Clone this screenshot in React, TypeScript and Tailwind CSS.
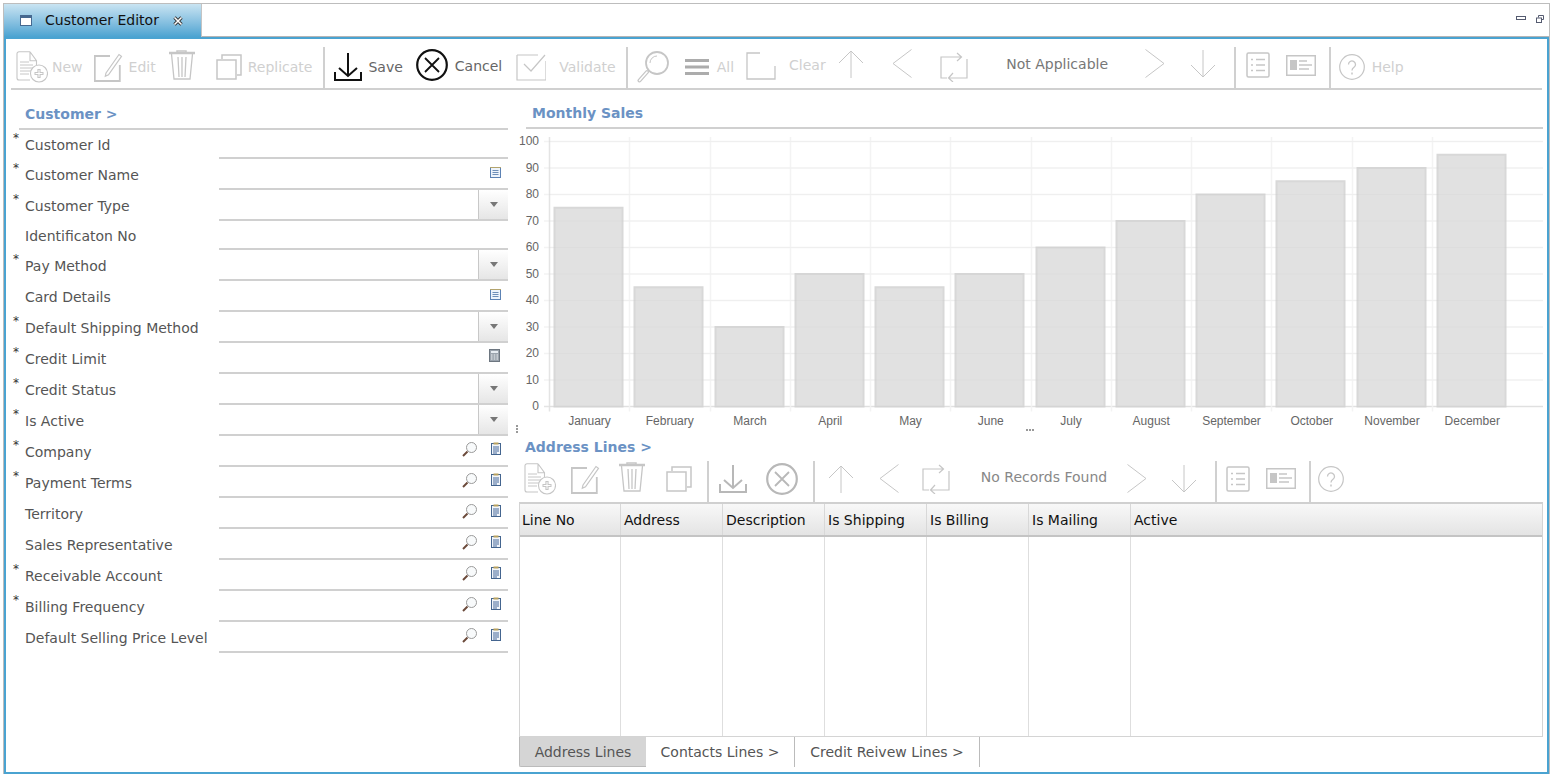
import type { ReactNode } from 'react';

type IconProps = { className?: string };

function NewIcon({ className }: IconProps) {
    return (
        <svg viewBox="0 0 32 32" fill="none" stroke="currentColor" className={className}>
            <path d="M14 .7H3a2 2 0 0 0-2 2V27a2 2 0 0 0 2 2h11M14 .7l6.500 9V14M14 .7v9h6.500" strokeWidth="1.100" />
            <path d="M4 11h9M4 14h13M4 17h13M4 20h11M4 23h9" strokeWidth="1" />
            <circle cx="23" cy="22.500" r="8.500" fill="#fff" strokeWidth="1.100" />
            <path d="M23 18v9M18.500 22.500h9" strokeWidth="3.200" />
            <path d="M23 19v7M19.500 22.500h7" stroke="#fff" strokeWidth="1" />
        </svg>
    );
}

function EditIcon({ className }: IconProps) {
    return (
        <svg viewBox="0 0 29 30" fill="none" stroke="currentColor" className={className}>
            <path d="M16 4H.8v25h25V13" strokeWidth="1.800" />
            <path d="M12 21l13-18.500 2.500 1.800-13 18.500-3.200 1.500z" strokeWidth="1.200" fill="#fff" />
        </svg>
    );
}

function TrashIcon({ className }: IconProps) {
    return (
        <svg viewBox="0 0 26 30" fill="none" stroke="currentColor" className={className}>
            <path d="M0 3h26" strokeWidth="2.500" />
            <path d="M8 2V1h9v1" strokeWidth="1.500" />
            <path d="M2.500 4l2.500 25h16l2.500-25M9 7l1 20M13 7v20M17 7l-1 20" strokeWidth="1.300" />
        </svg>
    );
}

function ReplicateIcon({ className }: IconProps) {
    return (
        <svg viewBox="0 0 26 26" fill="none" stroke="currentColor" strokeWidth="1.500" className={className}>
            <rect x="1" y="6" width="19" height="19" />
            <path d="M6 5V1h19v20h-4" />
        </svg>
    );
}

function SaveIcon({ className }: IconProps) {
    return (
        <svg viewBox="0 0 28 28" fill="none" stroke="currentColor" strokeWidth="2" className={className}>
            <path d="M1 19v8h26v-8" />
            <path d="M14 0v23M5 15l9 8 9-8" />
        </svg>
    );
}

function CancelIcon({ className }: IconProps) {
    return (
        <svg viewBox="0 0 32 32" fill="none" stroke="currentColor" className={className}>
            <circle cx="16" cy="16" r="14.800" strokeWidth="2.200" />
            <path d="M9 9l14 14M23 9L9 23" strokeWidth="1.800" />
        </svg>
    );
}

function ValidateIcon({ className }: IconProps) {
    return (
        <svg viewBox="0 0 30 29" fill="none" stroke="currentColor" strokeWidth="1.200" className={className}>
            <path d="M1 3h21M1 3v25h29V9" />
            <path d="M8 12l7 7L29 3" />
        </svg>
    );
}

function SearchIcon({ className }: IconProps) {
    return (
        <svg viewBox="0 0 32 32" fill="none" stroke="currentColor" className={className}>
            <circle cx="20" cy="12" r="11" strokeWidth="1.800" />
            <path d="M10 21L2.500 29.500" strokeWidth="4" strokeLinecap="round" />
            <path d="M10 21L2.500 29.500" stroke="#fff" strokeWidth="1.500" strokeLinecap="round" />
            <path d="M13 12a7 7 0 0 1 7-7" strokeWidth="1" />
        </svg>
    );
}

function AllIcon({ className }: IconProps) {
    return (
        <svg viewBox="0 0 24 16" fill="currentColor" className={className}>
            <rect y="0" width="24" height="3" />
            <rect y="6.500" width="24" height="3" />
            <rect y="13" width="24" height="3" />
        </svg>
    );
}

function ClearIcon({ className }: IconProps) {
    return (
        <svg viewBox="0 0 30 28" fill="none" stroke="currentColor" strokeWidth="1.300" className={className}>
            <path d="M14 1H1v26h28V14" />
        </svg>
    );
}

function UpIcon({ className }: IconProps) {
    return (
        <svg viewBox="0 0 26 28" fill="none" stroke="currentColor" className={className}>
            <path d="M13 1v27M1 13L13 1l12 12" />
        </svg>
    );
}

function DownIcon({ className }: IconProps) {
    return (
        <svg viewBox="0 0 26 28" fill="none" stroke="currentColor" className={className}>
            <path d="M13 0v27M1 15l12 12 12-12" />
        </svg>
    );
}

function LeftIcon({ className }: IconProps) {
    return (
        <svg viewBox="0 0 20 29" fill="none" stroke="currentColor" className={className}>
            <path d="M19.500 .5L1 14.500l18.500 14" />
        </svg>
    );
}

function RightIcon({ className }: IconProps) {
    return (
        <svg viewBox="0 0 20 29" fill="none" stroke="currentColor" className={className}>
            <path d="M.5 .5L19 14.500.5 28.500" />
        </svg>
    );
}

function RepeatIcon({ className }: IconProps) {
    return (
        <svg viewBox="0 0 28 30" fill="none" stroke="currentColor" strokeWidth="1.200" className={className}>
            <path d="M7 26H1V5h20M17 1l4.500 4-4.500 4" />
            <path d="M27 7v19H9M13 21l-4.500 5 4.500 4" />
        </svg>
    );
}

function ListIcon({ className }: IconProps) {
    return (
        <svg viewBox="0 0 24 26" fill="none" stroke="currentColor" className={className}>
            <rect x="1" y="1" width="22" height="24" rx="1.500" strokeWidth="1.500" />
            <path d="M5 7.500h2M10 7.500h9M5 13h2M10 13h9M5 18.500h2M10 18.500h9" strokeWidth="1.500" />
        </svg>
    );
}

function CardIcon({ className }: IconProps) {
    return (
        <svg viewBox="0 0 30 21" fill="none" stroke="currentColor" className={className}>
            <rect x=".75" y=".75" width="28.500" height="19.500" strokeWidth="1.500" />
            <rect x="4" y="5" width="7" height="10" fill="currentColor" stroke="none" />
            <path d="M13 6h8M13 10h13M13 14h10" strokeWidth="1.500" />
        </svg>
    );
}

function HelpIcon({ className }: IconProps) {
    return (
        <svg viewBox="0 0 26 26" fill="none" stroke="currentColor" className={className}>
            <circle cx="13" cy="13" r="12.300" strokeWidth="1.200" />
            <path d="M9.500 10.500a3.500 3.500 0 1 1 5.500 2.800c-1.300 1-2 1.600-2 3.200" strokeWidth="1.300" />
            <path d="M13 18.500v2" strokeWidth="1.500" />
        </svg>
    );
}

function NoteIcon() {
    return (
        <svg viewBox="0 0 11 11" className="h-[11px] w-[11px]">
            <rect x=".5" y=".5" width="10" height="10" fill="#eef4fb" stroke="#5c82b4" />
            <path d="M0 .5h11" stroke="#b3a46e" />
            <path d="M2.500 3.500h6M2.500 5.500h6M2.500 7.500h6" stroke="#6f8fb8" />
        </svg>
    );
}

function CalcIcon() {
    return (
        <svg viewBox="0 0 11 13" className="h-[13px] w-[11px]">
            <rect x=".5" y=".5" width="10" height="12" fill="#9aa3ad" stroke="#6d7680" />
            <rect x="2" y="2" width="7" height="2" fill="#e6ecf2" />
            <path d="M2 6h1.500M4.750 6h1.500M7.500 6H9M2 8h1.500M4.750 8h1.500M7.500 8H9M2 10h1.500M4.750 10h1.500M7.500 10H9" stroke="#eef1f4" />
        </svg>
    );
}

function LensIcon() {
    return (
        <svg viewBox="0 0 15 15" fill="none" className="h-[15px] w-[15px]">
            <circle cx="9.500" cy="5.500" r="5" fill="#f8fafb" stroke="#9a9a9a" />
            <path d="M5.500 9.500l-4.500 4.500" stroke="#6b4a3a" strokeWidth="2" />
        </svg>
    );
}

function ClipIcon() {
    return (
        <svg viewBox="0 0 10 13" className="mb-[2px] h-[13px] w-[10px]">
            <rect x=".5" y="1.500" width="9" height="11" fill="#f1f5fa" stroke="#44658f" />
            <rect x="2.500" y=".5" width="5" height="2" fill="#b9a25f" />
            <path d="M2 5h6M2 7h6M2 9h6M2 11h4" stroke="#46689a" />
        </svg>
    );
}

function Sep({ className }: IconProps) {
    return <div className={`w-[2px] self-stretch bg-[#d0d0d0] ${className}`} />;
}

function ToolText({ className, children }: { className?: string; children: ReactNode }) {
    return <span className={`whitespace-nowrap text-[14px] leading-none ${className}`}>{children}</span>;
}

function MainToolbar() {
    const off = 'text-[#c6c6c6]';
    const on = 'text-[#111]';
    return (
        <div className="ml-[5px] mr-[5px] flex h-[51px] items-center border-b-2 border-[#d0d0d0] pt-[6px]">
            <NewIcon className={`ml-[5px] h-[32px] w-[32px] ${off}`} />
            <ToolText className="ml-[4px] text-[#d0d0d0]">New</ToolText>
            <EditIcon className={`ml-[11px] h-[30px] w-[29px] ${off}`} />
            <ToolText className="ml-[6px] text-[#d0d0d0]">Edit</ToolText>
            <TrashIcon className={`mb-[3px] ml-[13px] h-[30px] w-[26px] ${off}`} />
            <ReplicateIcon className={`ml-[21px] h-[26px] w-[26px] ${off}`} />
            <ToolText className="ml-[6px] text-[#d0d0d0]">Replicate</ToolText>
            <Sep className="ml-[11px] mt-[2px]" />
            <SaveIcon className={`ml-[9px] h-[28px] w-[28px] ${on}`} />
            <ToolText className="ml-[6px] text-[#666]">Save</ToolText>
            <CancelIcon className={`mb-[3px] ml-[13px] h-[32px] w-[32px] ${on}`} />
            <ToolText className="mb-[2px] ml-[7px] text-[#666]">Cancel</ToolText>
            <ValidateIcon className={`ml-[14px] h-[29px] w-[30px] ${off}`} />
            <ToolText className="ml-[13px] text-[#d0d0d0]">Validate</ToolText>
            <Sep className="ml-[10px] mt-[2px]" />
            <SearchIcon className={`ml-[9px] h-[32px] w-[32px] ${off}`} />
            <AllIcon className="ml-[16px] h-[16px] w-[24px] text-[#acacac]" />
            <ToolText className="ml-[8px] text-[#d0d0d0]">All</ToolText>
            <ClearIcon className={`mb-[2px] ml-[12px] h-[28px] w-[30px] ${off}`} />
            <ToolText className="mb-[3px] ml-[13px] text-[#d0d0d0]">Clear</ToolText>
            <UpIcon className={`mb-[5px] ml-[12px] h-[28px] w-[26px] ${off}`} />
            <LeftIcon className={`mb-[6px] ml-[28px] h-[29px] w-[20px] ${off}`} />
            <RepeatIcon className={`ml-[28px] h-[30px] w-[28px] ${off}`} />
            <span className="mb-[5px] ml-[6px] w-[167px] text-center text-[14px] text-[#777]">Not Applicable</span>
            <RightIcon className={`mb-[6px] ml-[4px] h-[29px] w-[20px] ${off}`} />
            <DownIcon className={`mb-[5px] ml-[25px] h-[28px] w-[26px] ${off}`} />
            <Sep className="ml-[18px] mt-[2px]" />
            <ListIcon className={`mb-[3px] ml-[10px] h-[26px] w-[24px] ${off}`} />
            <CardIcon className={`mb-[2px] ml-[16px] h-[21px] w-[30px] ${off}`} />
            <Sep className="ml-[13px] mt-[2px]" />
            <HelpIcon className={`ml-[8px] h-[26px] w-[26px] ${off}`} />
            <ToolText className="ml-[7px] text-[#d0d0d0]">Help</ToolText>
        </div>
    );
}

function GridToolbar() {
    const off = 'text-[#c6c6c6]';
    const mid = 'text-[#b8b8b8]';
    const sep = 'mt-[3px] -mb-[3px]';
    return (
        <div className="flex h-[44px] items-center pb-[3px]">
            <NewIcon className={`ml-[5px] h-[32px] w-[32px] ${off}`} />
            <EditIcon className={`ml-[15px] h-[30px] w-[29px] ${off}`} />
            <TrashIcon className={`mb-[3px] ml-[19px] h-[30px] w-[26px] ${off}`} />
            <ReplicateIcon className={`ml-[21px] h-[26px] w-[26px] ${off}`} />
            <Sep className={`ml-[15px] ${sep}`} />
            <SaveIcon className={`ml-[10px] h-[28px] w-[28px] ${mid}`} />
            <CancelIcon className={`ml-[19px] h-[32px] w-[32px] ${mid}`} />
            <Sep className={`ml-[15px] ${sep}`} />
            <UpIcon className={`ml-[13px] h-[28px] w-[26px] ${off}`} />
            <LeftIcon className={`ml-[25px] h-[29px] w-[20px] ${off}`} />
            <RepeatIcon className={`ml-[23px] h-[30px] w-[28px] ${off}`} />
            <span className="mb-[3px] ml-[1px] w-[176px] pl-[10px] text-center text-[14px] text-[#888]">No Records Found</span>
            <RightIcon className={`ml-[0px] h-[29px] w-[20px] ${off}`} />
            <DownIcon className={`ml-[24px] h-[28px] w-[26px] ${off}`} />
            <Sep className={`ml-[18px] ${sep}`} />
            <ListIcon className={`ml-[9px] h-[26px] w-[24px] ${off}`} />
            <CardIcon className={`ml-[16px] h-[21px] w-[30px] ${off}`} />
            <Sep className={`ml-[13px] ${sep}`} />
            <HelpIcon className={`ml-[7px] h-[26px] w-[26px] ${off}`} />
        </div>
    );
}

type RowKind = 'text' | 'note' | 'select' | 'calc' | 'lookup';

const rows: { label: string; required?: boolean; kind: RowKind }[] = [
    { label: 'Customer Id', required: true, kind: 'text' },
    { label: 'Customer Name', required: true, kind: 'note' },
    { label: 'Customer Type', required: true, kind: 'select' },
    { label: 'Identificaton No', kind: 'text' },
    { label: 'Pay Method', required: true, kind: 'select' },
    { label: 'Card Details', kind: 'note' },
    { label: 'Default Shipping Method', required: true, kind: 'select' },
    { label: 'Credit Limit', required: true, kind: 'calc' },
    { label: 'Credit Status', required: true, kind: 'select' },
    { label: 'Is Active', required: true, kind: 'select' },
    { label: 'Company', required: true, kind: 'lookup' },
    { label: 'Payment Terms', required: true, kind: 'lookup' },
    { label: 'Territory', kind: 'lookup' },
    { label: 'Sales Representative', kind: 'lookup' },
    { label: 'Receivable Account', required: true, kind: 'lookup' },
    { label: 'Billing Frequency', required: true, kind: 'lookup' },
    { label: 'Default Selling Price Level', kind: 'lookup' },
];

function FormRow({ label, required, kind, short }: { label: string; required?: boolean; kind: RowKind; short: boolean }) {
    return (
        <div className={`flex ${short ? 'h-[29px]' : 'h-[31px]'}`}>
            <div className="relative w-[200px] shrink-0 self-center whitespace-nowrap pl-[6px] text-[14px] leading-[16px] text-[#555]">
                {required && <span className="absolute left-[-6px] top-[-6px] text-[12px] leading-[14px] text-[#333]">*</span>}
                {label}
            </div>
            <div className="flex flex-1 items-stretch justify-end border-b-2 border-[#d0d0d0]">
                {kind === 'select' && (
                    <div className="flex w-[30px] items-center justify-center border-l border-[#c8c8c8] bg-gradient-to-b from-white to-[#e6e6e6]">
                        <div className="h-0 w-0 border-x-[4px] border-t-[5px] border-x-transparent border-t-[#777]" />
                    </div>
                )}
                {kind === 'note' && (
                    <div className="mr-[7px] flex items-center pb-[2px]">
                        <NoteIcon />
                    </div>
                )}
                {kind === 'calc' && (
                    <div className="mr-[8px] flex items-center pb-[5px]">
                        <CalcIcon />
                    </div>
                )}
                {kind === 'lookup' && (
                    <div className="mr-[7px] flex items-center gap-[14px] pb-[3px]">
                        <LensIcon />
                        <ClipIcon />
                    </div>
                )}
            </div>
        </div>
    );
}

const sales: [string, number][] = [
    ['January', 75],
    ['February', 45],
    ['March', 30],
    ['April', 50],
    ['May', 45],
    ['June', 50],
    ['July', 60],
    ['August', 70],
    ['September', 80],
    ['October', 85],
    ['November', 90],
    ['December', 95],
];

function SalesChart() {
    // drawn in page-like coords, x0 = 519, y0 = 129
    const left = 30;
    const step = 80.25;
    const zero = 277.5;
    const unit = 2.65;
    const ticks = Array.from({ length: 11 }, (_, i) => i);
    return (
        <svg width="1024" height="308" className="block" style={{ fontFamily: '"Liberation Sans", Arial, sans-serif' }}>
            {ticks.map((i) => {
                const y = zero - i * 10 * unit;
                return (
                    <g key={i}>
                        <path d={`M25 ${y}H1024`} stroke={i === 0 ? '#e4e4e4' : '#f3f3f3'} strokeWidth="1.500" />
                        <text x="20" y={y + 3.500} textAnchor="end" fontSize="12" fill="#666">
                            {i * 10}
                        </text>
                    </g>
                );
            })}
            {sales.map(([name], i) => (
                <path key={name} d={`M${Math.round(left + i * step) + 0.5} 8V${zero + 5}`} stroke={i === 0 ? '#e4e4e4' : '#f3f3f3'} strokeWidth="1.500" />
            ))}
            {sales.map(([name, v], i) => {
                const x = left + i * step + 5;
                return (
                    <g key={name}>
                        <rect x={Math.round(x) + 0.5} y={zero - v * unit} width="68" height={v * unit} fill="#e1e1e1" stroke="#d8d8d8" strokeWidth="2" />
                        <text x={x + 35.500} y="296" textAnchor="middle" fontSize="12" fill="#666">
                            {name}
                        </text>
                    </g>
                );
            })}
            {ticks.map((i) => (
                <path key={i} d={`M30 ${zero - i * 10 * unit}H1024`} stroke="#000" strokeOpacity="0.015" />
            ))}
        </svg>
    );
}

const columns = ['Line No', 'Address', 'Description', 'Is Shipping', 'Is Billing', 'Is Mailing'];

function DataTable() {
    return (
        <div className="flex flex-1 flex-col border border-t-2 border-[#d4d4d4] border-t-[#d0d0d0]">
            <div className="flex h-[33px] border-b-2 border-[#c4c4c4] bg-gradient-to-b from-[#f8f8f8] to-[#e4e4e4] text-[14px] leading-[33px] text-[#111]">
                {columns.map((c, i) => (
                    <div key={c} className={`${i === 0 ? 'w-[101px] pl-[2px]' : 'w-[102px] pl-[3px]'} border-r border-[#d8d8d8]`}>
                        {c}
                    </div>
                ))}
                <div className="flex-1 pl-[3px]">Active</div>
            </div>
            <div className="flex flex-1">
                {columns.map((c, i) => (
                    <div key={c} className={`${i === 0 ? 'w-[101px]' : 'w-[102px]'} border-r border-[#dedede]`} />
                ))}
            </div>
        </div>
    );
}

function BottomTabs() {
    return (
        <div className="flex h-[30px] text-[14px] text-[#555]">
            <div className="flex w-[127px] items-center justify-center rounded-bl-[2px] border-b border-l border-[#bbb] bg-[#d5d5d5] pt-[1px]">Address Lines</div>
            <div className="flex w-[149px] items-center justify-center border-r border-[#bbb]">Contacts Lines &gt;</div>
            <div className="flex w-[185px] items-center justify-center border-r border-[#bbb]">Credit Reivew Lines &gt;</div>
        </div>
    );
}

export default function App() {
    return (
        <div className="h-[777px] w-[1553px] overflow-hidden bg-white pt-[3px]" style={{ fontFamily: '"DejaVu Sans", Verdana, sans-serif' }}>
            <div className="mx-[3px] flex h-[771px] flex-col border border-b-0 border-[#bdbdbd]">
                <div className="flex h-[33px] shrink-0">
                    <div className="flex w-[198px] items-center border-r border-[#c4c4c4] bg-gradient-to-b from-[#c9e4f2] to-[#4aa3d1] pl-[16px] text-[14px] text-[#111]">
                        <svg viewBox="0 0 12 11" className="h-[11px] w-[12px]">
                            <rect x=".5" y=".5" width="11" height="10" fill="#fff" stroke="#46688f" />
                            <rect x="1" y="1" width="10" height="2" fill="#46688f" />
                        </svg>
                        <span className="ml-[13px] whitespace-nowrap">Customer Editor</span>
                        <svg viewBox="0 0 10 10" className="ml-[14px] h-[10px] w-[10px]">
                            <path d="M1.500 1.500l7 7M8.500 1.500l-7 7" stroke="#333" strokeWidth="3.200" />
                            <path d="M1.500 1.500l7 7M8.500 1.500l-7 7" stroke="#fff" strokeWidth="1.500" />
                        </svg>
                    </div>
                    <div className="flex flex-1 items-start justify-end gap-[10px] border-b border-[#b5b5b5] pr-[5px] pt-[11px]">
                        <div className="mt-[1px] h-[4px] w-[10px] border border-[#555b70]" />
                        <svg viewBox="0 0 8 8" className="h-[8px] w-[8px]" fill="none" stroke="#555b70">
                            <path d="M2.500 2.500V.5h5v4h-2" />
                            <rect x=".5" y="3" width="5" height="4.500" />
                        </svg>
                    </div>
                </div>
                <div className="flex min-h-0 flex-1 flex-col border-2 border-[#4aa3d1]">
                    <MainToolbar />
                    <div className="relative flex flex-1">
                        <div className="ml-[13px] w-[489px] shrink-0">
                            <div className="flex h-[40px] items-center border-b-2 border-[#d0d0d0] pl-[6px] pt-[10px] text-[14px] font-bold text-[#6b92c4]">Customer &gt;</div>
                            {rows.map((r, i) => (
                                <FormRow key={r.label} label={r.label} required={r.required} kind={r.kind} short={i === 0 || i === 3} />
                            ))}
                        </div>
                        <div className="absolute left-[510px] top-[335px] flex flex-col gap-[1px]">
                            <div className="h-[2px] w-[2px] bg-[#999]" />
                            <div className="h-[2px] w-[2px] bg-[#999]" />
                            <div className="h-[2px] w-[2px] bg-[#999]" />
                        </div>
                        <div className="ml-[11px] flex w-[1024px] shrink-0 flex-col pb-[5px]">
                            <div className="ml-[7px] flex h-[39px] items-center border-b-2 border-[#d0d0d0] pl-[6px] pt-[10px] text-[14px] font-bold text-[#6b92c4]">Monthly Sales</div>
                            <div className="relative">
                                <SalesChart />
                                <div className="absolute left-[507px] top-[300px] flex gap-[1px]">
                                    <div className="h-[2px] w-[2px] bg-[#999]" />
                                    <div className="h-[2px] w-[2px] bg-[#999]" />
                                    <div className="h-[2px] w-[2px] bg-[#999]" />
                                </div>
                            </div>
                            <div className="ml-[6px] h-[21px] text-[14px] font-bold leading-[20px] text-[#6b92c4]">Address Lines &gt;</div>
                            <GridToolbar />
                            <DataTable />
                            <BottomTabs />
                        </div>
                    </div>
                </div>
            </div>
        </div>
    );
}
